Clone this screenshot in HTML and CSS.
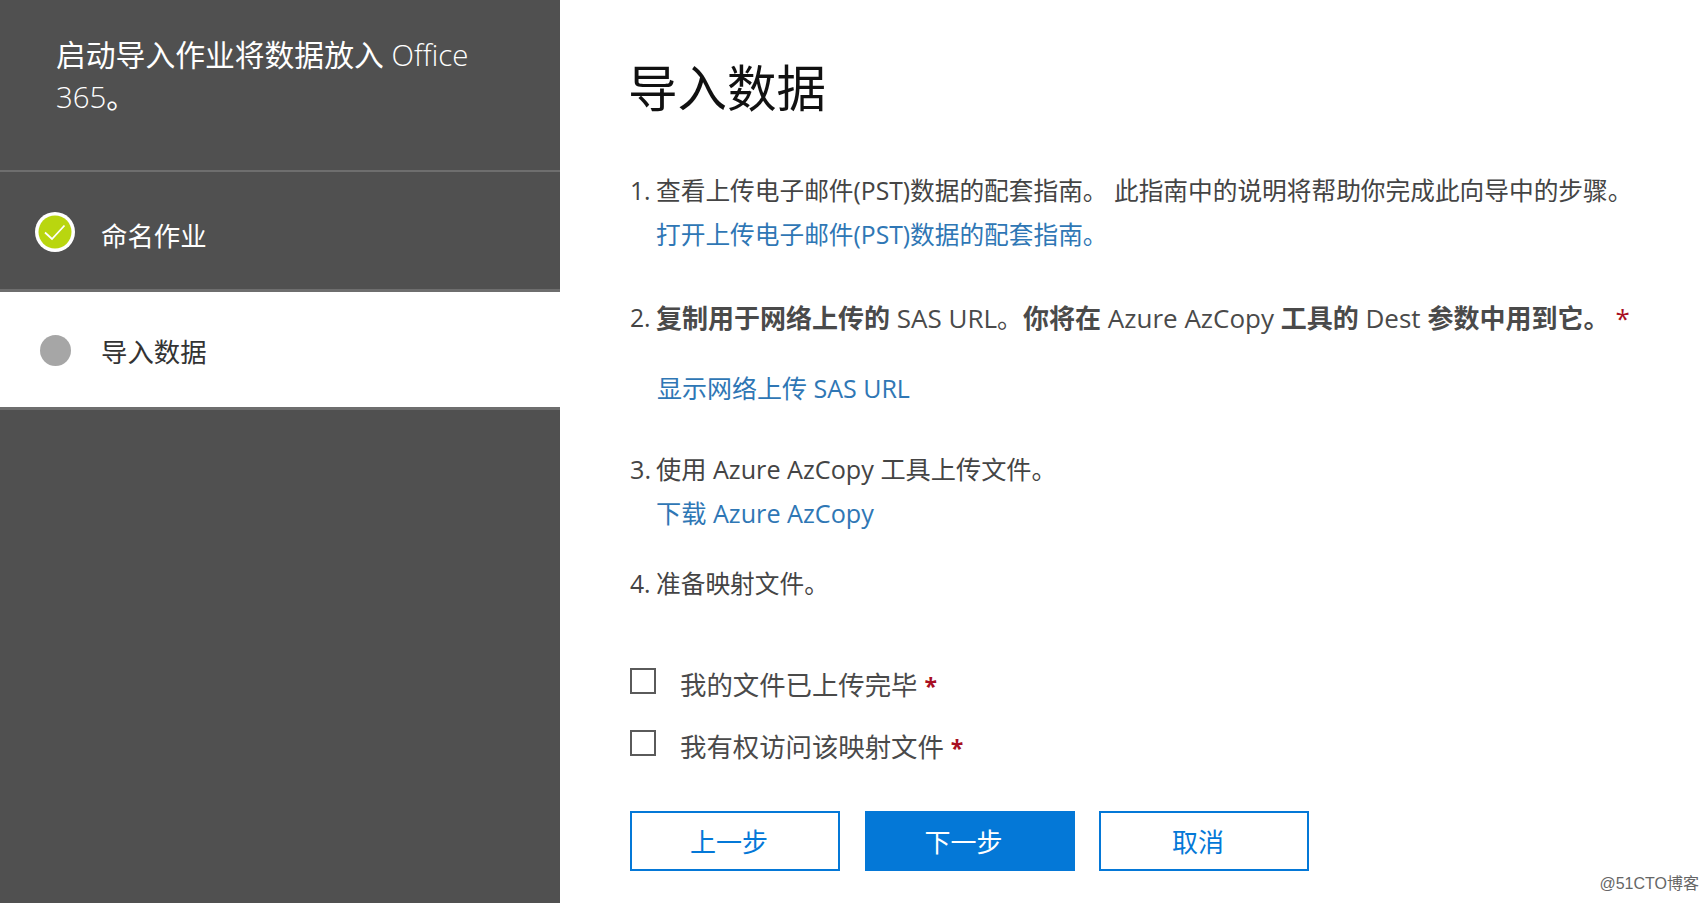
FILE: index.html
```html
<!DOCTYPE html>
<html lang="zh-CN">
<head>
<meta charset="utf-8">
<title>导入数据</title>
<link rel="stylesheet" href="styles.css">
</head>
<body>
<div class="page">
  <aside class="sidebar">
    <div class="intro">启动导入作业将数据放入 <span class="light">Office</span> <span class="light">365</span>。</div>
    <div class="step">
      <svg class="step-icon done" viewBox="0 0 40 40" width="40" height="40"><circle cx="20" cy="20" r="20" fill="#fff"/><circle cx="20" cy="20" r="16.5" fill="#b9d60f"/><path d="M10 20.5 L17 27 L29.5 13.5" fill="none" stroke="#fff" stroke-width="1.8"/></svg>
      <span class="step-label">命名作业</span>
    </div>
    <div class="step current">
      <span class="dot"></span>
      <span>导入数据</span>
    </div>
  </aside>
  <main class="main">
    <h1>导入数据</h1>
    <ol class="tasks">
      <li class="task t1"><span class="num">1.</span><div><p>查看上传电子邮件(PST)数据的配套指南。 此指南中的说明将帮助你完成此向导中的步骤。</p><a class="link">打开上传电子邮件(PST)数据的配套指南。</a></div></li>
      <li class="task t2"><span class="num">2.</span><div><p class="strong-line"><b>复制用于网络上传的</b> SAS URL。<b>你将在</b> Azure AzCopy <b>工具的</b> Dest <b>参数中用到它。</b><span class="star star-far">*</span></p><a class="link show">显示网络上传 SAS URL</a></div></li>
      <li class="task t3"><span class="num">3.</span><div><p>使用 Azure AzCopy 工具上传文件。</p><a class="link">下载 Azure AzCopy</a></div></li>
      <li class="task t4"><span class="num">4.</span><div><p>准备映射文件。</p></div></li>
    </ol>
    <div class="checks">
      <label class="check"><span class="box"></span><span>我的文件已上传完毕 <span class="star">*</span></span></label>
      <label class="check"><span class="box"></span><span>我有权访问该映射文件 <span class="star">*</span></span></label>
    </div>
    <div class="buttons">
      <button class="btn">上一步</button>
      <button class="btn primary">下一步</button>
      <button class="btn">取消</button>
    </div>
  </main>
</div>
<div class="watermark">@51CTO博客</div>
</body>
</html>
```
FILE: styles.css
```css
* { box-sizing: border-box; }
html, body { margin: 0; height: 100%; overflow: hidden; background: #fff; }
body { font-family: "Open Sans", "Noto Sans CJK SC", sans-serif; color: #444; }
.page { display: flex; height: 903px; }
.sidebar { width: 560px; flex: none; background: #505050; color: #fff; }
.intro { height: 172px; padding: 34px 70px 0 56px; font-size: 29.8px; line-height: 42px; font-weight: 400; border-bottom: 2px solid #6e6e6e; }
.light { font-weight: 300; font-size: 29.4px; }
.step { height: 120px; display: flex; align-items: center; font-size: 26.4px; border-bottom: 3px solid #6e6e6e; padding: 10px 0 0 35px; gap: 26px; }
.step-label { margin-top: -2px; }
.step-icon { flex: none; margin-top: -8px; }
.step.current { background: #fff; color: #333; height: 118px; padding: 2px 0 0 40px; gap: 30px; }
.dot { width: 31px; height: 31px; border-radius: 50%; background: #a6a6a6; margin-top: 0; }
.main { flex: 1; padding: 58px 0 0 68px; min-width: 0; }
h1 { margin: 0; font-size: 49.5px; line-height: 60px; font-weight: 400; color: #111; }
.tasks { list-style: none; margin: 0 0 0 2px; padding: 0; font-size: 24.7px; line-height: 44px; }
.task { display: flex; }
.num { width: 26px; flex: none; }
.task p { margin: 0; white-space: nowrap; }
.task b { font-weight: 700; }
.strong-line { font-size: 26px; color: #4a4a4a; }
.link { color: #2f77b5; display: block; }
.t1 { margin-top: 51px; }
.t2 { margin-top: 39px; }
.show { margin-top: 26px; margin-left: 1px; font-size: 25px; }
.t3 { margin-top: 37px; font-size: 25.2px; }
.t4 { margin-top: 27px; }
.star { color: #a80f22; font-weight: 700; font-size: 23px; }
.star-far { margin-left: 6px; font-weight: 400; font-size: 26px; }
.checks { margin: 57px 0 0 2px; display: flex; flex-direction: column; gap: 17px; }
.check { display: flex; gap: 24px; font-size: 26.4px; line-height: 44px; color: #4a4a4a; }
.box { width: 26px; height: 26px; margin-top: 5px; border: 2px solid #5a5a5a; flex: none; }
.buttons { margin: 41px 0 0 2px; display: flex; gap: 24.5px; }
.btn { width: 210px; height: 60px; border: 2px solid #0478d7; background: #fff; color: #0478d7; font: inherit; font-size: 26px; padding: 0 12px 0 0; }
.btn.primary { background: #0478d7; color: #fff; }
.watermark { position: absolute; right: 8px; bottom: 9px; font-family: "Liberation Sans", "Noto Sans CJK SC", sans-serif; font-size: 16px; color: #666; }
```
